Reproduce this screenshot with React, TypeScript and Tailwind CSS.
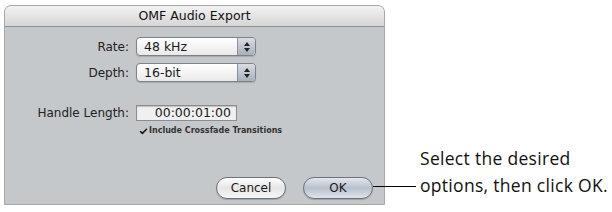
import { Check } from 'lucide-react';

function Stepper() {
  return (
    <div className="flex h-full w-[18px] flex-col items-center justify-center gap-[2px] rounded-r-[4px] border-l border-[#8a9099] bg-gradient-to-b from-[#d9dde3] to-[#a9b0bb]">
      <svg width="6" height="4" viewBox="0 0 6 4">
        <path d="M3 0 L6 4 L0 4 Z" fill="#222" />
      </svg>
      <svg width="6" height="4" viewBox="0 0 6 4">
        <path d="M0 0 L6 0 L3 4 Z" fill="#222" />
      </svg>
    </div>
  );
}

function PopUp({ value }: { value: string }) {
  return (
    <div className="flex h-[19px] w-[120px] items-stretch rounded-[4px] border border-[#7c828a] bg-gradient-to-b from-white to-[#e9e9e9] shadow-[0_1px_1px_rgba(0,0,0,0.15)]">
      <span className="flex-1 pl-[7px] text-[12.5px] leading-[17px] text-[#1a1a1a]">{value}</span>
      <Stepper />
    </div>
  );
}

function PillButton({ label, primary }: { label: string; primary?: boolean }) {
  return (
    <div
      className={`flex h-[22px] w-[70px] items-center justify-center rounded-full border border-[#6d7179] text-[12px] text-[#1a1a1a] shadow-[0_1px_1px_rgba(0,0,0,0.2)] ${
        primary
          ? 'bg-gradient-to-b from-[#e4e8ee] via-[#b7c0cc] to-[#dfe4ea]'
          : 'bg-gradient-to-b from-white via-[#e6e6e6] to-[#f6f6f6]'
      }`}
    >
      {label}
    </div>
  );
}

export default function App() {
  return (
    <div className="relative flex h-[212px] w-[612px] bg-white pl-[4px] pt-[5px] font-['DejaVu_Sans',sans-serif]">
      <div className="flex h-[200px] w-[381px] flex-col overflow-hidden rounded-t-[7px] border border-[#a6a8ab] bg-[#c5c8cb]">
        <div className="flex h-[21px] items-center justify-center border-b border-[#8f9295] bg-gradient-to-b from-[#f2f2f2] to-[#d6d6d6] text-[12.5px] text-[#111]">
          OMF Audio Export
        </div>
        <div className="flex-1">
          <div className="grid grid-cols-[124px_1fr] items-center gap-x-[7px] gap-y-[7px] pt-[10px] text-[12px] text-[#222]">
            <span className="text-right">Rate:</span>
            <PopUp value="48 kHz" />
            <span className="text-right">Depth:</span>
            <PopUp value="16-bit" />
          </div>
          <div className="mt-[22px] grid grid-cols-[124px_1fr] items-center gap-x-[7px] text-[12px] text-[#222]">
            <span className="text-right">Handle Length:</span>
            <div className="h-[16px] w-[101px] border border-[#8a8d91] bg-[#f0f0f0] pr-[5px] text-right text-[12.5px] leading-[14px] text-[#1a1a1a] shadow-[inset_0_1px_1px_rgba(0,0,0,0.2)]">
              00:00:01:00
            </div>
          </div>
          <div className="ml-[134px] mt-[3px] flex items-center gap-[1px] text-[8px] font-bold text-[#333]">
            <Check size={9} strokeWidth={4} className="text-[#111]" />
            <span>Include Crossfade Transitions</span>
          </div>
          <div className="mt-[40px] flex justify-end gap-[17px] pr-[11px]">
            <PillButton label="Cancel" />
            <PillButton label="OK" primary />
          </div>
        </div>
      </div>
      <div className="absolute left-[373px] top-[186px] h-px w-[43px] bg-black" />
      <div className="pl-[35px] pt-[140px] font-['Open_Sans',sans-serif] text-[17.5px] leading-[27px] tracking-[0.3px] text-[#111]">
        Select the desired
        <br />
        options, then click OK.
      </div>
    </div>
  );
}
